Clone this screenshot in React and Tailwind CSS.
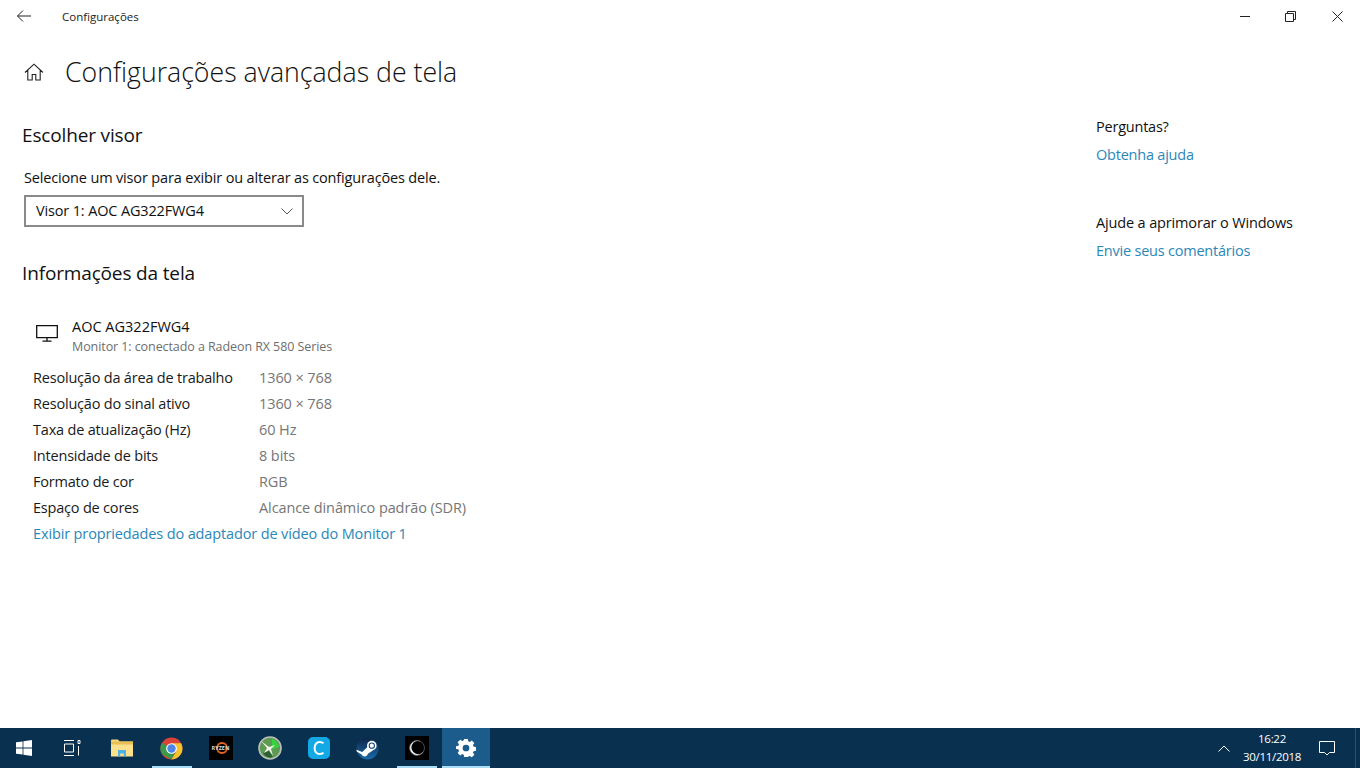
import React from "react";

const F = { fontFamily: '"Open Sans", "Noto Sans", sans-serif' };

function Row({ k, v }) {
  return (
    <div className="flex h-[26px] items-center text-[14.5px]">
      <div className="w-[226px] tracking-[-0.2px] text-[#1a1a1a]">{k}</div>
      <div className="tracking-[-0.1px] text-[#767676]">{v}</div>
    </div>
  );
}

function TaskIcon({ children, bar, active, className }) {
  return (
    <div className={`relative flex h-10 shrink-0 items-center justify-center ${active ? "bg-[#1b5c8c]" : ""} ${className}`}>
      {children}
      {bar && <div className={`absolute bottom-0 h-[2px] bg-[#a9dcf7] ${active ? "inset-x-0" : "w-10"}`} />}
    </div>
  );
}

export default function App() {
  return (
    <div style={F} className="flex h-[768px] w-[1360px] flex-col overflow-hidden bg-white text-[#111]">
      <main className="flex min-h-0 flex-1 flex-col">
        <header className="flex h-8 shrink-0 items-center">
          <div className="flex w-[62px] justify-center pr-[14px]">
            <svg width="16" height="16" viewBox="0 0 16 16" fill="none" stroke="#222" strokeWidth="1">
              <path d="M15 8H1.500M7 2.500 1.500 8 7 13.500" />
            </svg>
          </div>
          <span className="pt-px text-[11.5px] text-[#222]">Configurações</span>
          <div className="ml-auto flex">
            <div className="flex h-8 w-[46px] items-center justify-center">
              <div className="h-px w-[10px] bg-[#222]" />
            </div>
            <div className="flex h-8 w-[46px] items-center justify-center pr-[2px]">
              <svg width="11" height="11" viewBox="0 0 11 11" fill="none" stroke="#222" strokeWidth="1">
                <path d="M.5 2.500h8v8h-8zM2.500 2.500v-2h8v8h-2" />
              </svg>
            </div>
            <div className="flex h-8 w-[46px] items-center justify-center">
              <svg width="11" height="11" viewBox="0 0 11 11" fill="none" stroke="#222" strokeWidth="1">
                <path d="M.5.5l10 10M10.500.5l-10 10" />
              </svg>
            </div>
          </div>
        </header>

        <div className="flex min-h-0 flex-1">
          <div className="flex-1 pl-[22px]">
            <div className="mt-[14px] flex h-[46px] items-center pt-[5px]">
              <svg className="ml-[2px]" width="20" height="18" viewBox="0 0 20 18" fill="none" stroke="#222" strokeWidth="1.100">
                <path d="M1 9.500 10 1.200l9 8.300M3.800 7.500V17h4.400v-5.500h3.600V17h4.400V7.500" />
              </svg>
              <h1 className="ml-[21px] pt-[2px] text-[26.7px] font-light text-[#111]">Configurações avançadas de tela</h1>
            </div>

            <h2 className="mt-[29px] h-7 text-[19px] leading-7 tracking-[-0.15px] text-[#111]">Escolher visor</h2>
            <p className="ml-[2px] mt-[19px] h-5 text-[14.5px] leading-5 tracking-[-0.16px] text-[#111]">Selecione um visor para exibir ou alterar as configurações dele.</p>
            <div className="ml-[2px] mt-[7px] flex h-8 w-[280px] items-center justify-between border-2 border-[#8a8a8a] pl-[10px] pr-[9px] text-[14.5px] tracking-[-0.15px] text-[#111]">
              <span>Visor 1: AOC AG322FWG4</span>
              <svg width="12" height="7" viewBox="0 0 12 7" fill="none" stroke="#555" strokeWidth="1">
                <path d="M.5.5 6 6 11.500.5" />
              </svg>
            </div>

            <h2 className="mt-[32px] h-7 text-[19px] leading-7 tracking-[-0.15px] text-[#111]">Informações da tela</h2>

            <div className="ml-[14px] mt-[30px] flex h-[40px] items-start">
              <svg className="mt-[8px]" width="22" height="17" viewBox="0 0 22 17" fill="none" stroke="#111" strokeWidth="1.300">
                <path d="M.7.7h20.600v12H.7zM11 12.700v3.500M6.500 16.200h9" />
              </svg>
              <div className="ml-[14px]">
                <div className="text-[14.5px] leading-5 text-[#111]">AOC AG322FWG4</div>
                <div className="text-[12.5px] leading-[20px] tracking-[-0.08px] text-[#6e6e6e]">Monitor 1: conectado a Radeon RX 580 Series</div>
              </div>
            </div>

            <div className="ml-[11px] mt-[8px]">
              <Row k="Resolução da área de trabalho" v="1360 × 768" />
              <Row k="Resolução do sinal ativo" v="1360 × 768" />
              <Row k="Taxa de atualização (Hz)" v="60 Hz" />
              <Row k="Intensidade de bits" v="8 bits" />
              <Row k="Formato de cor" v="RGB" />
              <Row k="Espaço de cores" v="Alcance dinâmico padrão (SDR)" />
              <div className="flex h-[26px] items-center text-[14.5px] tracking-[-0.13px] text-[#2b87b8]">Exibir propriedades do adaptador de vídeo do Monitor 1</div>
            </div>
          </div>

          <aside className="w-[264px] shrink-0 pt-[81px] text-[14.5px] leading-7 tracking-[-0.22px]">
            <div className="text-[#111]">Perguntas?</div>
            <div className="text-[#2b87b8]">Obtenha ajuda</div>
            <div className="mt-[40px] tracking-[-0.15px] text-[#111]">Ajude a aprimorar o Windows</div>
            <div className="text-[#2b87b8]">Envie seus comentários</div>
          </aside>
        </div>
      </main>

      <footer className="flex h-10 shrink-0 items-center bg-[#0a304f] text-white">
        <TaskIcon className="w-12">
          <svg width="16" height="16" viewBox="0 0 16 16" fill="#fff">
            <path d="M0 2.300 6.600 1.400v6.200H0zM7.400 1.300 16 0v7.600H7.400zM0 8.400h6.600v6.200L0 13.700zM7.400 8.400H16V16l-8.600-1.300z" />
          </svg>
        </TaskIcon>
        <TaskIcon className="w-12">
          <svg width="18" height="16" viewBox="0 0 18 16" fill="none" stroke="#fff" strokeWidth="1">
            <path d="M1 .5h10M1 15.500h10M1.500 4h9v8h-9zM15 .5v3h2v-3zM15.500 6v9.500" />
          </svg>
        </TaskIcon>
        <TaskIcon className="w-[52px]">
          <svg width="22" height="18" viewBox="0 0 22 18">
            <path d="M0 1.500A1 1 0 0 1 1 .5h6l2 2.500h-9z" fill="#f5d77d" />
            <rect x="0" y="2.500" width="22" height="15" fill="#fbe08e" />
            <rect x="0" y="2.500" width="22" height="3" fill="#e9be54" />
            <path d="M7 17.500v-6.500h8v6.500h-2.200v-3h-3.600v3z" fill="#4fb0e4" />
          </svg>
        </TaskIcon>
        <TaskIcon bar className="w-12">
          <svg className="mr-[1px]" width="23" height="23" viewBox="0 0 24 24">
            <circle cx="12" cy="12" r="11.500" fill="#d9433a" />
            <path d="M12 12 2 6.300A11.500 11.500 0 0 0 2 17.700L12 23.500 17.800 12Z" fill="#389a4b" />
            <path d="M12 6.500h10A11.500 11.500 0 0 1 12 23.500L17 15Z" fill="#f4c430" />
            <circle cx="12" cy="12" r="5.600" fill="#fff" />
            <circle cx="12" cy="12" r="4.400" fill="#4f85e8" />
          </svg>
        </TaskIcon>
        <TaskIcon className="w-[49px]">
          <div className="relative flex h-6 w-6 items-center justify-center bg-black">
            <svg className="absolute inset-0" width="24" height="24" viewBox="0 0 24 24" fill="none">
              <circle cx="13" cy="12" r="5" stroke="#e8641e" strokeWidth="1.800" />
            </svg>
            <span className="relative text-[5.5px] font-bold text-[#ddd]">RYZEN</span>
          </div>
        </TaskIcon>
        <TaskIcon className="w-[49px]">
          <svg width="24" height="24" viewBox="0 0 24 24">
            <circle cx="12" cy="12" r="11" fill="#5d9a52" />
            <circle cx="12" cy="12" r="11" fill="none" stroke="#b9c0b7" strokeWidth="1.600" />
            <path d="M14 3c4 1 6 4 7 8l-7 2z" fill="#36d43c" />
            <path d="M5 17a9 9 0 0 0 10 4l-4-6z" fill="#2e5e33" />
            <path d="M3 5 11 11 17 9 13 13 15 20 11 14 6 17 9 12z" fill="#f2f2ea" />
          </svg>
        </TaskIcon>
        <TaskIcon className="w-[49px]">
          <svg width="22" height="22" viewBox="0 0 22 22" fill="none">
            <rect width="22" height="22" rx="5" fill="#12a9e6" />
            <path d="M15.500 6.300A6 6 0 0 0 11.800 5C8.600 5 6.600 7.700 6.600 11s2 6 5.200 6a6 6 0 0 0 3.700-1.300" stroke="#fff" strokeWidth="2" />
          </svg>
        </TaskIcon>
        <TaskIcon className="w-[49px]">
          <svg width="23" height="23" viewBox="0 0 24 24">
            <defs>
              <linearGradient id="steamBg" x1="0" y1="0" x2="0" y2="1">
                <stop offset="0" stopColor="#0d2547" />
                <stop offset="1" stopColor="#1a6aa8" />
              </linearGradient>
            </defs>
            <circle cx="12" cy="12" r="11.500" fill="url(#steamBg)" />
            <path d="M.4 13.200 6.500 15.700l5-4.700 3-3.300 3 6.500-5 3.300a3.500 3.500 0 0 1-6.600.8L.8 15.200z" fill="#fff" />
            <circle cx="16.500" cy="9" r="5" fill="#fff" />
            <circle cx="16.500" cy="9" r="3.300" fill="#16457c" />
            <circle cx="16.500" cy="9" r="2.200" fill="#fff" />
          </svg>
        </TaskIcon>
        <TaskIcon bar className="w-[50px]">
          <div className="flex h-6 w-6 items-center justify-center bg-black">
            <svg width="18" height="18" viewBox="0 0 18 18" fill="none">
              <path d="M13 2.600A7.400 7.400 0 1 0 16.200 11 6.600 6.600 0 1 1 13 2.600Z" fill="#eee" />
              <circle cx="9" cy="9" r="7.500" stroke="#777" strokeWidth="0.600" />
            </svg>
          </div>
        </TaskIcon>
        <TaskIcon bar active className="w-12">
          <svg width="20" height="20" viewBox="-1 0 22 20" fill="#fff" fillRule="evenodd">
            <path d="M8 0h4l.5 2.600 1.700.7L16.400 1.800l2.800 2.800-1.500 2.200.7 1.700 2.600.5v4l-2.600.5-.7 1.700 1.500 2.200-2.800 2.800-2.200-1.500-1.700.7L12 20H8l-.5-2.600-1.700-.7-2.200 1.500L.8 15.400l1.500-2.200-.7-1.700L-1 11V8l2.600-.5.7-1.700L.8 3.600 3.600.8l2.200 1.500 1.700-.7zM10 6.300a3.700 3.700 0 1 0 0 7.400 3.700 3.700 0 0 0 0-7.400z" />
          </svg>
        </TaskIcon>

        <div className="ml-auto flex h-full items-center">
          <svg width="12" height="7" viewBox="0 0 12 7" fill="none" stroke="#fff" strokeWidth="1">
            <path d="M.5 6.500 6 1l5.500 5.500" />
          </svg>
          <div className="ml-[11px] flex w-[62px] flex-col items-center text-[11.5px] leading-[18px] tracking-[-0.3px] text-white">
            <span>16:22</span>
            <span>30/11/2018</span>
          </div>
          <div className="ml-[16px] flex w-4">
            <svg width="16" height="15" viewBox="0 0 16 15" fill="none" stroke="#fff" strokeWidth="1">
              <path d="M.5.5h15v11h-5L8 14l-2.500-2.500h-5z" />
            </svg>
          </div>
          <div className="ml-[20px] h-full w-px bg-[#2a5270]" />
          <div className="w-1" />
        </div>
      </footer>
    </div>
  );
}
